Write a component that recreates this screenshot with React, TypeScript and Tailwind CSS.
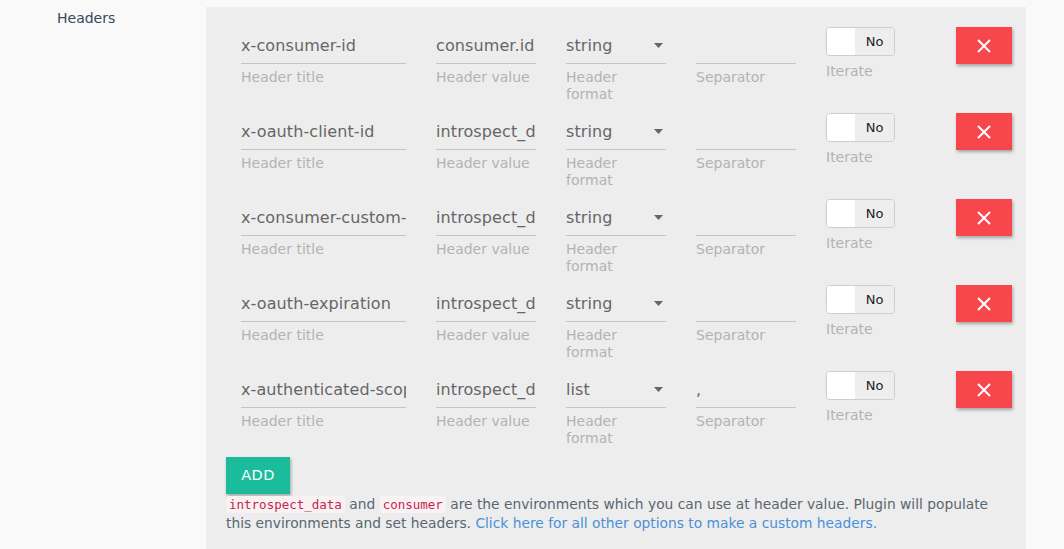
import React from "react";

const rows = [
  { title: "x-consumer-id", value: "consumer.id", format: "string", sep: "" },
  { title: "x-oauth-client-id", value: "introspect_data.client_id", format: "string", sep: "" },
  { title: "x-consumer-custom-id", value: "introspect_data.custom", format: "string", sep: "" },
  { title: "x-oauth-expiration", value: "introspect_data.exp", format: "string", sep: "" },
  { title: "x-authenticated-scope", value: "introspect_data.scope", format: "list", sep: "," },
];

const font = { fontFamily: '"DejaVu Sans", "Liberation Sans", sans-serif' };
const mono = { fontFamily: '"DejaVu Sans Mono", "Liberation Mono", monospace' };

function Field({ w, value, label, arrow }: { w: string; value: string; label: string; arrow?: boolean }) {
  return (
    <div className={`${w} shrink-0`}>
      <div className="relative h-[37px] border-b border-[#c4c4c4] flex items-center pt-[1px]">
        <input
          readOnly
          value={value}
          className="w-full min-w-0 bg-transparent outline-none p-0 text-[16px] tracking-[0.1px] text-[#666]"
          style={font}
        />
        {arrow && (
          <svg className="absolute right-[3px] top-[16px]" width="9" height="5" viewBox="0 0 9 5">
            <path d="M0 0 L9 0 L4.5 5 Z" fill="#666" />
          </svg>
        )}
      </div>
      <div className="pt-[5px] text-[14px] leading-[17px] text-[#b3b3b3]">{label}</div>
    </div>
  );
}

export default function App() {
  return (
    <div className="min-h-screen w-full bg-[#f9f9f9] flex pt-[7px]" style={font}>
      <div className="w-[206px] shrink-0 pl-[57px] pt-[1px] text-[14px] text-[#34495e]">Headers</div>
      <div className="w-[820px] shrink-0 bg-[#ededed] pl-5 pr-5 pt-5 pb-5 min-h-[542px]">
        {rows.map((r, i) => (
          <div key={i} className="h-[86px] pl-[15px] flex items-start">
            <Field w="w-[165px]" value={r.title} label="Header title" />
            <div className="w-[30px] shrink-0" />
            <Field w="w-[100px]" value={r.value} label="Header value" />
            <div className="w-[30px] shrink-0" />
            <Field w="w-[100px]" value={r.format} label="Header format" arrow />
            <div className="w-[30px] shrink-0" />
            <Field w="w-[100px]" value={r.sep} label="Separator" />
            <div className="w-[30px] shrink-0" />
            <div className="w-[100px] shrink-0">
              <div className="w-[69px] h-[29px] rounded-[4px] border border-[#cdcdcd] flex overflow-hidden">
                <div className="w-[28px] bg-white" />
                <div className="flex-1 bg-[#eeeeee] flex items-center justify-center text-[13px] text-[#222]">No</div>
              </div>
              <div className="pt-[7px] text-[14px] leading-[17px] text-[#b3b3b3]">Iterate</div>
            </div>
            <div className="w-[30px] shrink-0" />
            <button className="w-[56px] h-[37px] shrink-0 bg-[#f8474c] flex items-center justify-center shadow-[1px_2px_3px_rgba(0,0,0,0.3)]">
              <svg width="14" height="14" viewBox="0 0 14 14">
                <path d="M1 1 L13 13 M13 1 L1 13" stroke="#fff" strokeWidth="2" />
              </svg>
            </button>
          </div>
        ))}
        <button className="w-[64px] h-[37px] bg-[#1abc9c] text-white text-[14.5px] tracking-[0.5px] shadow-[1px_2px_3px_rgba(0,0,0,0.3)] flex items-center justify-center">
          ADD
        </button>
        <p className="mt-[1px] text-[13.8px] leading-[18px] text-[#5a6670] whitespace-nowrap">
          <code className="px-[3px] py-[1px] rounded-[3px] bg-[#f9f2f4] text-[#c7254e] text-[12.5px]" style={mono}>
            introspect_data
          </code>{" "}
          and{" "}
          <code className="px-[3px] py-[1px] rounded-[3px] bg-[#f9f2f4] text-[#c7254e] text-[12.5px]" style={mono}>
            consumer
          </code>{" "}
          are the environments which you can use at header value. Plugin will populate
          <br />
          this environments and set headers.{" "}
          <a className="text-[#4a90d9]" href="#">
            Click here for all other options to make a custom headers.
          </a>
        </p>
      </div>
    </div>
  );
}
